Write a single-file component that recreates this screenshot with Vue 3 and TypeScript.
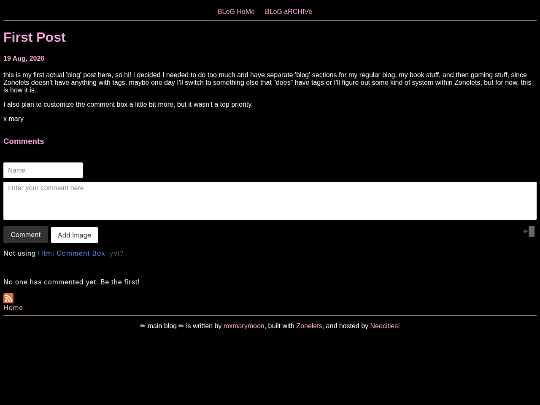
<script setup lang="ts">
const nav: string[] = ['BLoG HoMe', 'BLoG aRCHIVe']
</script>

<template>
  <div class="viewport">
    <div class="page">
      <header class="top">
        <a v-for="n in nav" :key="n" class="navlink">{{ n }}</a>
      </header>
      <hr class="rule" />
      <main class="main">
        <h1 class="title">First Post</h1>
        <div class="date">19 Aug, 2026</div>
        <p class="p first">this is my first actual 'blog' post here, so hi! I decided I needed to do too much and have separate 'blog' sections for my regular blog, my book stuff, and then gaming stuff, since Zonelets doesn't have anything with tags. maybe one day I'll switch to something else that "does" have tags or I'll figure out some kind of system within Zonelets, but for now, this is how it is.</p>
        <p class="p">I also plan to customize the comment box a little bit more, but it wasn't a top priority.</p>
        <p class="p">x mary</p>
        <h2 class="comments">Comments</h2>
        <div class="namebox">Name</div>
        <div class="textbox">Enter your comment here</div>
        <div class="actions">
          <button class="btn dark">Comment</button>
          <button class="btn light">Add Image</button>
          <svg class="login" width="28" height="28" viewBox="0 0 28 28">
            <rect x="13" y="1" width="14" height="26" rx="1" fill="#666" />
            <path d="M1 14h11M6 10l-4 4 4 4" stroke="#555" stroke-width="2.5" fill="none" />
          </svg>
        </div>
        <div class="notusing">Not using <a class="hcb">Html Comment Box</a> <span class="yet">yet?</span></div>
        <div class="none">No one has commented yet. Be the first!</div>
        <svg class="rss" width="24" height="24" viewBox="0 0 24 24">
          <rect width="24" height="24" rx="3" fill="#ea6a30" />
          <circle cx="6.5" cy="17.5" r="2.5" fill="#fff" />
          <path d="M4 10.5a9.5 9.5 0 0 1 9.5 9.5M4 5a15 15 0 0 1 15 15" stroke="#fff" stroke-width="3" fill="none" />
        </svg>
        <a class="home">Home</a>
      </main>
      <hr class="rule low" />
      <footer class="foot">✏ main blog ✏ is written by <a class="pink">mxmarymoon</a>, built with <a class="pink">Zonelets</a>, and hosted by <a class="pink">Neocities!</a></footer>
    </div>
  </div>
</template>

<style>
html, body { background: #000; margin: 0; overflow: hidden; }
</style>

<style scoped>
.viewport { width: 540px; height: 405px; overflow: hidden; background: #000; }
.page { width: 1280px; height: 960px; transform: scale(0.421875); transform-origin: 0 0; will-change: transform; filter: blur(0.6px); color: #fff; font-family: "Liberation Sans", Arial, sans-serif; font-size: 16px; box-sizing: border-box; }
.top { display: flex; justify-content: center; gap: 24px; padding: 19px 24px 0 0; height: 28px; }
.navlink { color: #f9a9dc; line-height: 18px; }
.rule { border: 0; height: 2px; background: #8a7280; margin: 0 8px; }
.main { padding: 0 8px; }
.title { margin: 21px 0 0; font-size: 32px; line-height: 37px; color: #f9a9dc; font-weight: 700; }
.date { margin-top: 23px; font-weight: 700; color: #f9a9dc; line-height: 18px; }
.p { margin: 0 0 16px; line-height: 18px; }
.first { margin-top: 21px; }
.comments { margin: 33px 0 0; font-size: 18.72px; line-height: 22px; color: #f9a9dc; font-weight: 700; }
.namebox { width: 188px; height: 37px; margin-top: 39px; background: #fff; box-sizing: border-box; border-radius: 2px; color: #888; font-family: Inter, sans-serif; font-size: 15px; line-height: 37px; padding-left: 11px; }
.textbox { height: 90px; margin-top: 9px; background: #fff; border-radius: 2px; box-sizing: border-box; color: #888; font-family: Inter, sans-serif; font-size: 15px; line-height: 20px; padding: 5px 11px; }
.actions { display: flex; align-items: flex-start; gap: 7px; margin-top: 15px; }
.btn { border: 0; font-family: Inter, sans-serif; font-size: 15.5px; padding: 0; border-radius: 3px; }
.dark { width: 106px; height: 40px; background: #333; color: #eee; }
.light { width: 111px; height: 38px; margin-top: 2px; background: #fff; color: #333; }
.login { margin-left: auto; margin-right: 4px; margin-top: -2px; }
.notusing { margin-top: 13px; font-family: Inter, sans-serif; font-size: 16px; letter-spacing: .5px; line-height: 22px; color: #eee; }
.hcb { color: #5b8ae0; letter-spacing: .85px; }
.yet { color: #555; margin-left: 5px; }
.none { margin-top: 46px; font-family: Inter, sans-serif; font-size: 16px; letter-spacing: .5px; line-height: 22px; color: #eee; }
.rss { display: block; margin-top: 16px; }
.home { display: block; color: #f9a9dc; font-family: Inter, sans-serif; font-size: 16px; letter-spacing: .5px; line-height: 20px; }
.low { margin-top: 8px; }
.foot { text-align: center; margin-top: 15px; line-height: 18px; }
.pink { color: #f9a9dc; }
</style>
